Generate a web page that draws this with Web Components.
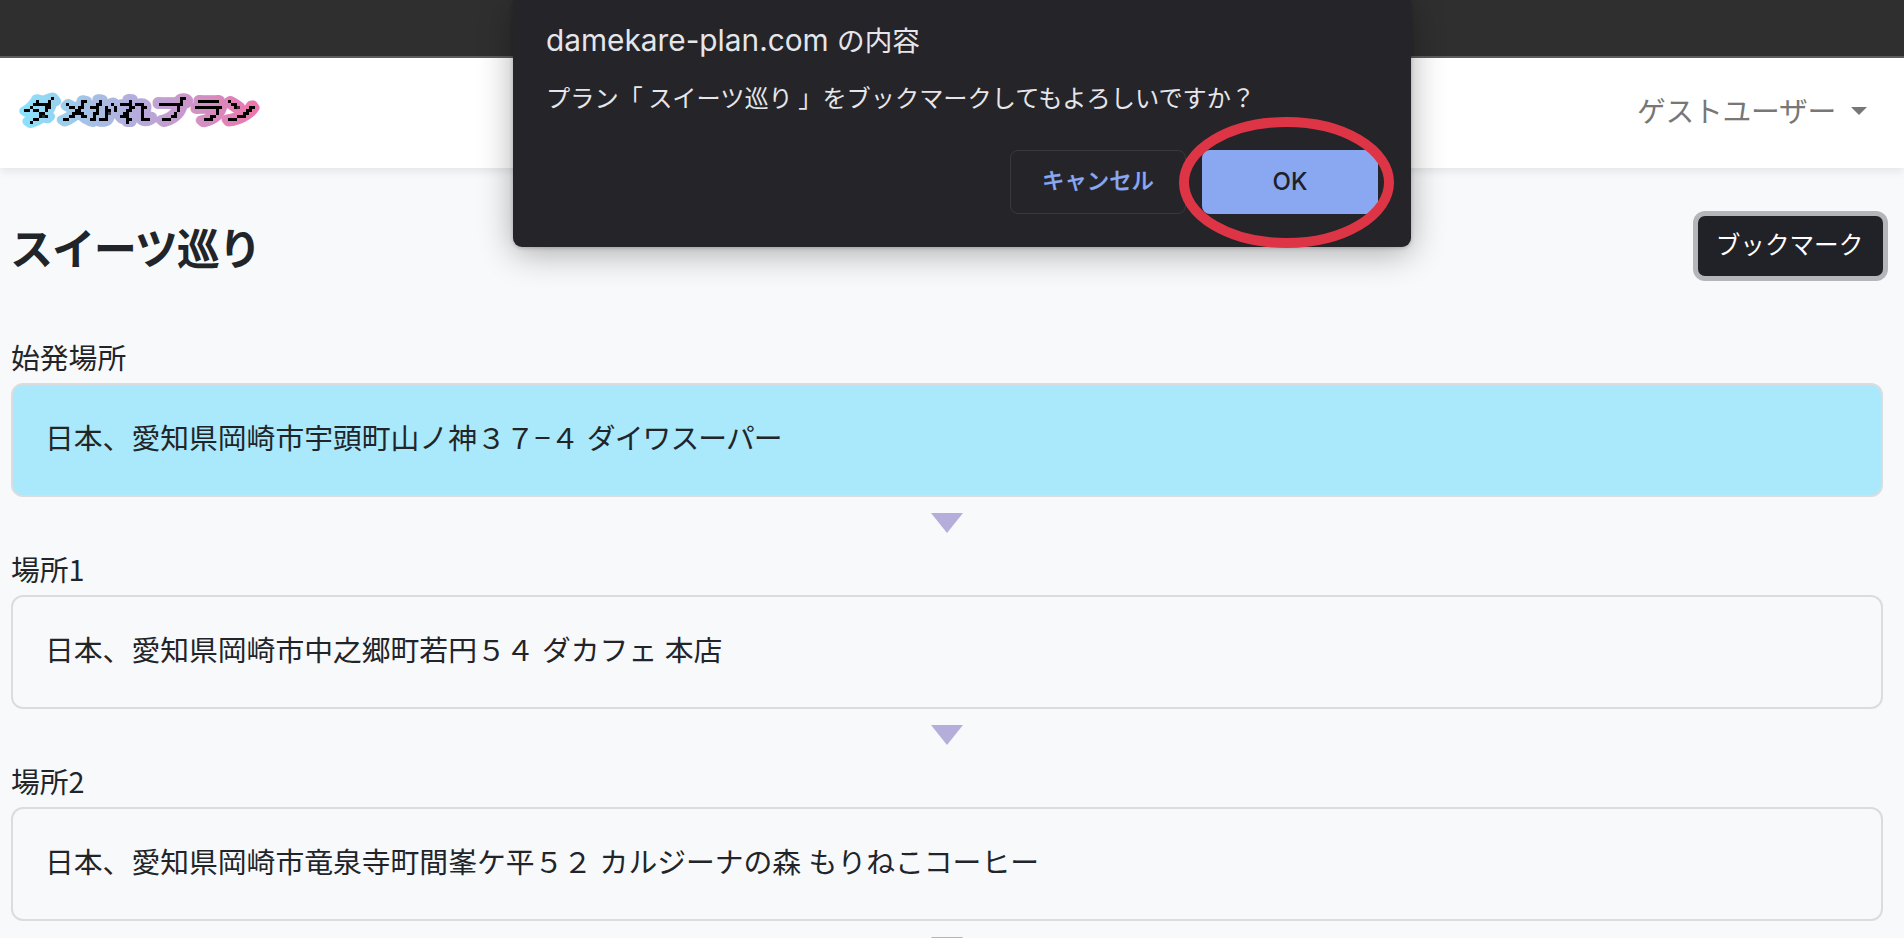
<!DOCTYPE html>
<html lang="ja">
<head>
<meta charset="utf-8">
<title>ダメかれプラン</title>
<style>
html,body{margin:0;height:938px;overflow:hidden;background:#f8f9fb}
body{font-family:"Noto Sans CJK JP",sans-serif;color:#212529}
.tight{letter-spacing:-.9px}
.host{font-size:29.8px}
</style>
</head>
<body>
<plan-page>
  <browser-strip></browser-strip>
  <nav-bar><site-logo></site-logo><user-menu slot="end">ゲストユーザー</user-menu></nav-bar>
  <plan-header>スイーツ巡り<bookmark-button slot="action">ブックマーク</bookmark-button></plan-header>
  <plan-stop active><span slot="label">始発場所</span>日本、愛知県岡崎市宇頭町山ノ神３７−４ <span class="tight">ダイワスーパー</span></plan-stop>
  <plan-stop><span slot="label">場所1</span>日本、愛知県岡崎市中之郷町若円５４ ダカフェ 本店</plan-stop>
  <plan-stop><span slot="label">場所2</span>日本、愛知県岡崎市竜泉寺町間峯ケ平５２ カルジーナの森 もりねこコーヒー</plan-stop>
</plan-page>
<confirm-dialog><span slot="title"><span class="host">damekare-plan.com </span>の内容</span>プラン「 スイーツ巡り 」をブックマークしてもよろしいですか？</confirm-dialog>
<script>
const define = (name, html) => customElements.define(name, class extends HTMLElement {
  constructor() {
    super();
    this.attachShadow({mode: 'open'}).innerHTML = html;
  }
});

define('plan-page', `<style>
:host{display:flex;flex-direction:column;height:938px;overflow:hidden}
</style><slot></slot>`);

define('browser-strip', `<style>
:host{display:block;flex:none;box-sizing:border-box;height:58px;background:#2f2f2f;border-bottom:2px solid #5d5d5d}
</style>`);

define('nav-bar', `<style>
:host{display:flex;flex:none;box-sizing:border-box;height:110px;justify-content:space-between;align-items:center;padding:0 37px 0 15px;background:#fff;box-shadow:0 4px 8px rgba(0,0,0,.075);position:relative}
</style><slot></slot><slot name="end"></slot>`);

define('site-logo', `<style>
:host{display:block;width:250px;height:50px}
svg{display:block}
text{font:400 31px "Noto Sans CJK JP",sans-serif}
</style>
<svg width="250" height="50" viewBox="0 0 250 50">
  <defs>
    <linearGradient id="g" gradientUnits="userSpaceOnUse" x1="5" y1="0" x2="225" y2="0">
      <stop offset="0" stop-color="#88e4fc"/><stop offset=".25" stop-color="#a3c5e8"/>
      <stop offset=".52" stop-color="#b8a9d9"/><stop offset=".8" stop-color="#d68cc0"/><stop offset="1" stop-color="#ee74aa"/>
    </linearGradient>
    <filter id="p" filterUnits="userSpaceOnUse" x="0" y="0" width="249" height="48">
      <feComponentTransfer in="SourceGraphic" result="s"><feFuncA type="linear" slope="20" intercept="-8"/></feComponentTransfer>
      <feFlood x="1" y="1" width="1" height="1" flood-color="#000"/>
      <feComposite x="0" y="0" width="3" height="3"/>
      <feTile result="t"/>
      <feComposite in="s" in2="t" operator="in"/>
      <feMorphology operator="dilate" radius="1"/>
    </filter>
  </defs>
  <g transform="scale(1.08 .88)">
    <text x="7.3 40.5 66.4 96.1 129 163.7 192.4" y="37.5" fill="url(#g)" stroke="url(#g)" stroke-width="11" stroke-linejoin="round" aria-hidden="true">ダメかれプラン</text>
  </g>
  <g filter="url(#p)"><g transform="scale(1.08 .88)">
    <text x="7.3 40.5 66.4 96.1 129 163.7 192.4" y="37.5" stroke="#000" stroke-width=".5">ダメかれプラン</text>
  </g></g>
</svg>`);

define('user-menu', `<style>
:host{display:flex;align-items:center;gap:15px;margin-bottom:5px;font-size:28.8px;letter-spacing:-.3px;color:#777}
span{line-height:44px;margin-bottom:2px}
i{width:0;height:0;border:8px solid transparent;border-top-color:#777;border-bottom:0}
</style><span><slot></slot></span><i></i>`);

define('plan-header', `<style>
:host{display:flex;flex:none;box-sizing:border-box;height:113px;margin-top:43px;padding:0 16px 0 10px;justify-content:space-between;align-items:flex-start}
h1{margin:5px 0 0;font-size:43.2px;line-height:60px;font-weight:700;letter-spacing:-1.3px}
</style><h1><slot></slot></h1><slot name="action"></slot>`);

define('bookmark-button', `<style>
:host{display:block;margin:5px 5px 0 0}
button{display:block;width:185px;height:60px;padding:0 2px 6px 0;border:0;border-radius:7px;background:#212227;box-shadow:0 0 0 5px #b4b6ba;color:#fff;font:400 24.6px/54px "Noto Sans CJK JP",sans-serif}
</style><button><slot></slot></button>`);

define('plan-stop', `<style>
:host{display:flex;flex:none;flex-direction:column;height:212px;padding:0 21px 0 11px;font-size:28.8px}
.label{height:59px;line-height:66px;white-space:nowrap}
.box{box-sizing:border-box;height:114px;border:2px solid #dadce0;border-radius:12px;padding:0 32px;line-height:104px;white-space:nowrap;word-spacing:1px}
:host([active]) .box{background:#a9e9fb}
svg{display:block;margin:16px auto 0;flex:none}
</style><div class="label"><slot name="label"></slot></div><div class="box"><slot></slot></div>
<svg width="32" height="20"><path d="M0 0H32L16 20Z" fill="#b5aeda"/></svg>`);

define('confirm-dialog', `<style>
:host{display:flex;flex-direction:column;position:absolute;left:513px;top:0;box-sizing:border-box;width:898px;height:247px;padding:18px 33px 33px 33px;border-radius:0 0 9px 9px;background:#242429;color:#e6e6ea;box-shadow:0 6px 34px rgba(0,0,0,.32),0 1px 4px rgba(0,0,0,.2);white-space:nowrap}
.title{height:44px;font:400 27.6px/44px Inter,"Noto Sans CJK JP",sans-serif}
.msg{margin-top:17px;font-size:24.2px;line-height:36px}
.row{display:flex;justify-content:flex-end;gap:16px;margin-top:auto}
button{box-sizing:border-box;width:176px;height:64px;border-radius:8px;padding:0;font:500 22.4px/60px Inter,"Noto Sans CJK JP",sans-serif}
.cancel{border:1px solid #38383d;background:none;color:#8aa8f2;padding-bottom:4px;-webkit-text-stroke:.3px #8aa8f2}
.ok{border:0;background:#8aa8f2;color:#202124;font-size:24px}
svg{position:absolute;left:664px;top:115px}
</style>
<div class="title"><slot name="title"></slot></div>
<div class="msg"><slot></slot></div>
<div class="row"><button class="cancel">キャンセル</button><button class="ok">OK</button></div>
<svg width="220" height="136"><ellipse cx="109.5" cy="67.5" rx="102.5" ry="60.5" fill="none" stroke="#dd3546" stroke-width="10"/></svg>`);
</script>
</body>
</html>
